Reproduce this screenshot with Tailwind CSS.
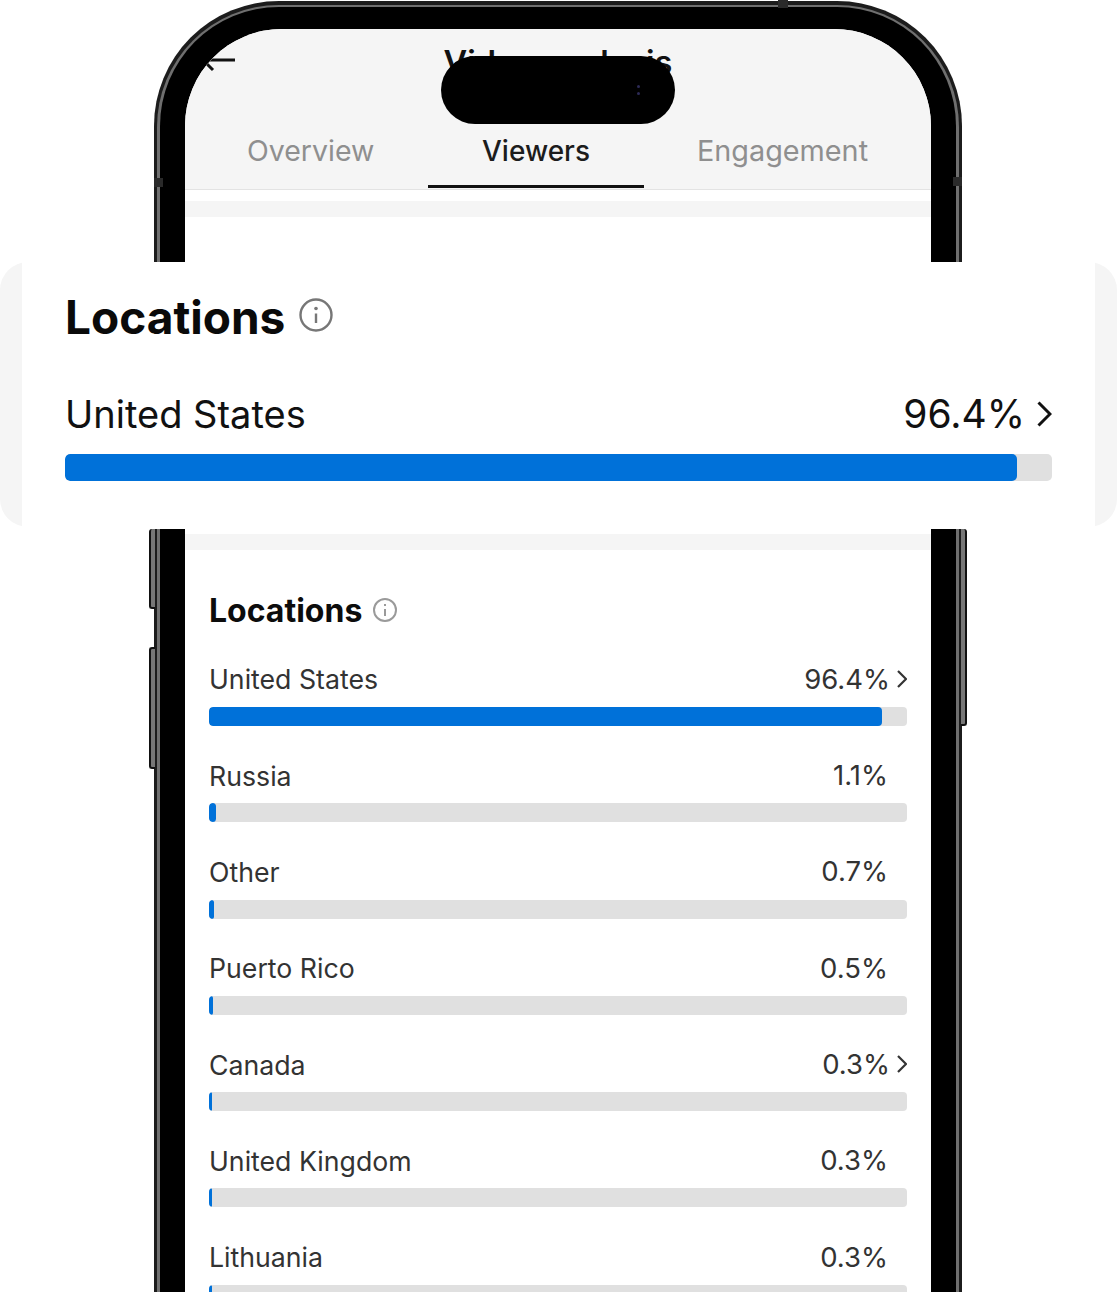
<!DOCTYPE html>
<html lang="en">
<head>
    <meta charset="UTF-8">
    <title>Locations</title>
    <script src="https://cdn.jsdelivr.net/npm/@tailwindcss/browser@4"></script>
</head>
<body class="bg-white">
    <div class="relative w-[1117px] h-[1292px] overflow-hidden bg-white font-['Inter',sans-serif]">

        <!-- side buttons -->
        <div class="absolute left-[149px] top-[529px] w-[6px] h-[80px] rounded-l-[3px] bg-[#777] border-l-2 border-b-2 border-[#111]"></div>
        <div class="absolute left-[149px] top-[647px] w-[6px] h-[122px] rounded-l-[3px] bg-[#777] border-l-2 border-y-2 border-[#111]"></div>
        <div class="absolute left-[961px] top-[529px] w-[6px] h-[197px] rounded-r-[3px] bg-[#777] border-r-2 border-b-2 border-[#111]"></div>

        <!-- phone -->
        <div class="ml-[154px] mt-px w-[808px] h-[1400px] rounded-t-[125px] bg-[#1c1c1c] px-[3px] pt-[4px]">
            <div class="h-full rounded-t-[122px] bg-[#6f6f6f] px-[3px] pt-[2px]">
                <div class="h-full rounded-t-[119px] bg-black pt-[22px] px-[25px]">
                    <div class="relative h-full rounded-t-[97px] overflow-hidden bg-white">

                        <div class="relative h-[161px] bg-[#f5f5f5] border-b border-[#e3e3e3]">
                            <svg class="absolute left-[14px] top-[19px]" width="40" height="32" viewBox="0 0 40 32" fill="none" stroke="#111" stroke-width="3"><path d="M4 12H36M14 2L4 12L14 22"/></svg>
                            <div class="pt-[14px] text-center text-[32.5px] font-semibold leading-[40px] text-[#111]">Video analysis</div>
                            <div class="absolute inset-x-0 top-[104px] flex">
                                <div class="w-[243px] pl-[62px] text-[28.5px] leading-[36px] text-[#8f8f8f]">Overview</div>
                                <div class="w-[216px] text-center text-[28px] font-medium leading-[36px] text-[#1c1c1c]">Viewers</div>
                                <div class="pl-[53px] text-[28.8px] leading-[36px] text-[#8f8f8f]">Engagement</div>
                            </div>
                            <div class="absolute left-[243px] top-[156px] w-[216px] h-[3px] bg-[#111]"></div>
                        </div>

                        <div class="mt-[11px] h-[16px] bg-[#f5f5f5]"></div>
                        <div class="mt-[317px] h-[16px] bg-[#f5f5f5]"></div>

                        <section class="px-[24px] pt-[42px]">
                            <div class="flex items-center h-[38px] gap-[10px]">
                                <h2 class="text-[32px] font-bold leading-[38px] text-[#0c0c0c]">Locations</h2>
                                <svg class="-mt-[2px]" width="26" height="26" viewBox="0 0 26 26" fill="none" stroke="#9a9a9a" stroke-width="2"><circle cx="13" cy="13" r="11"/><path d="M13 12v7M13 7v2"/></svg>
                            </div>
                            <div class="mt-[33px] flex flex-col gap-[33.3px]">
                                <div>
                                    <div class="flex items-center justify-between h-[33px] text-[26.7px] text-[#333]"><span>United States</span><span class="flex items-center gap-[7px] text-[27.5px]">96.4%<svg class="-mt-[2px]" width="10" height="18" viewBox="0 0 10 18" fill="none" stroke="#333" stroke-width="2.2"><path d="M1 1L9 9L1 17"/></svg></span></div>
                                    <div class="mt-[11px] h-[19px] rounded-[4px] bg-[#e0e0e0] overflow-hidden"><div class="h-full rounded-[4px] bg-[#0071d9]" style="width:673px"></div></div>
                                </div>
                                <div>
                                    <div class="flex items-center justify-between h-[33px] pr-[19px] text-[26.7px] text-[#333]"><span>Russia</span><span class="text-[27.5px]">1.1%</span></div>
                                    <div class="mt-[11px] h-[19px] rounded-[4px] bg-[#e0e0e0] overflow-hidden"><div class="h-full rounded-[4px] bg-[#0071d9]" style="width:7px"></div></div>
                                </div>
                                <div>
                                    <div class="flex items-center justify-between h-[33px] pr-[19px] text-[26.7px] text-[#333]"><span>Other</span><span class="text-[27.5px]">0.7%</span></div>
                                    <div class="mt-[11px] h-[19px] rounded-[4px] bg-[#e0e0e0] overflow-hidden"><div class="h-full rounded-[4px] bg-[#0071d9]" style="width:5px"></div></div>
                                </div>
                                <div>
                                    <div class="flex items-center justify-between h-[33px] pr-[19px] text-[26.7px] text-[#333]"><span>Puerto Rico</span><span class="text-[27.5px]">0.5%</span></div>
                                    <div class="mt-[11px] h-[19px] rounded-[4px] bg-[#e0e0e0] overflow-hidden"><div class="h-full rounded-[4px] bg-[#0071d9]" style="width:4px"></div></div>
                                </div>
                                <div>
                                    <div class="flex items-center justify-between h-[33px] text-[26.7px] text-[#333]"><span>Canada</span><span class="flex items-center gap-[7px] text-[27.5px]">0.3%<svg class="-mt-[2px]" width="10" height="18" viewBox="0 0 10 18" fill="none" stroke="#333" stroke-width="2.2"><path d="M1 1L9 9L1 17"/></svg></span></div>
                                    <div class="mt-[11px] h-[19px] rounded-[4px] bg-[#e0e0e0] overflow-hidden"><div class="h-full rounded-[4px] bg-[#0071d9]" style="width:3px"></div></div>
                                </div>
                                <div>
                                    <div class="flex items-center justify-between h-[33px] pr-[19px] text-[26.7px] text-[#333]"><span>United Kingdom</span><span class="text-[27.5px]">0.3%</span></div>
                                    <div class="mt-[11px] h-[19px] rounded-[4px] bg-[#e0e0e0] overflow-hidden"><div class="h-full rounded-[4px] bg-[#0071d9]" style="width:3px"></div></div>
                                </div>
                                <div>
                                    <div class="flex items-center justify-between h-[33px] pr-[19px] text-[26.7px] text-[#333]"><span>Lithuania</span><span class="text-[27.5px]">0.3%</span></div>
                                    <div class="mt-[11px] h-[19px] rounded-[4px] bg-[#e0e0e0] overflow-hidden"><div class="h-full rounded-[4px] bg-[#0071d9]" style="width:3px"></div></div>
                                </div>
                            </div>
                        </section>
                    </div>
                </div>
            </div>
        </div>

        <!-- antenna bands on the frame -->
        <div class="absolute left-[778px] top-0 w-[10px] h-[8px] bg-[#2a2a2a]"></div>
        <div class="absolute left-[154px] top-[178px] w-[9px] h-[9px] bg-[#2a2a2a]"></div>
        <div class="absolute left-[953px] top-[177px] w-[9px] h-[9px] bg-[#2a2a2a]"></div>

        <!-- camera island -->
        <div class="absolute left-[441px] top-[56px] w-[234px] h-[68px] rounded-[34px] bg-black">
            <div class="absolute left-[196px] top-[29px] w-[3px] h-[3px] rounded-full bg-[#2c2a55]"></div>
            <div class="absolute left-[196px] top-[36px] w-[3px] h-[3px] rounded-full bg-[#2c2a55]"></div>
        </div>

        <!-- enlarged card laid over the phone -->
        <div class="absolute left-0 top-[262px] w-[1117px] h-[267px] bg-white">
            <div class="h-[265px] rounded-[28px] bg-[#f5f5f5] px-[22px]">
                <div class="h-full bg-white px-[43px] pt-[30px]">
                    <div class="flex items-center gap-[14px] h-[50px]">
                        <h2 class="text-[46px] font-bold leading-[50px] text-[#0a0a0a]">Locations</h2>
                        <svg class="-mt-[4px]" width="34" height="34" viewBox="0 0 34 34" fill="none" stroke="#777" stroke-width="2.4"><circle cx="17" cy="17" r="15.5"/><path d="M17 15.5v9.500"/><circle cx="17" cy="10.500" r="1.800" fill="#777" stroke="none"/></svg>
                    </div>
                    <div class="mt-[49px] flex items-center justify-between h-[46px] text-[38px] text-[#111]">
                        <span>United States</span>
                        <span class="flex items-center gap-[12px] text-[39px]">96.4%<svg width="15" height="26" viewBox="0 0 15 26" fill="none" stroke="#111" stroke-width="3"><path d="M1.5 1.5L13 13L1.5 24.5"/></svg></span>
                    </div>
                    <div class="mt-[17px] h-[27px] rounded-[5px] bg-[#e0e0e0] overflow-hidden"><div class="h-full rounded-[5px] bg-[#0071d9]" style="width:952px"></div></div>
                </div>
            </div>
        </div>
    </div>
</body>
</html>
